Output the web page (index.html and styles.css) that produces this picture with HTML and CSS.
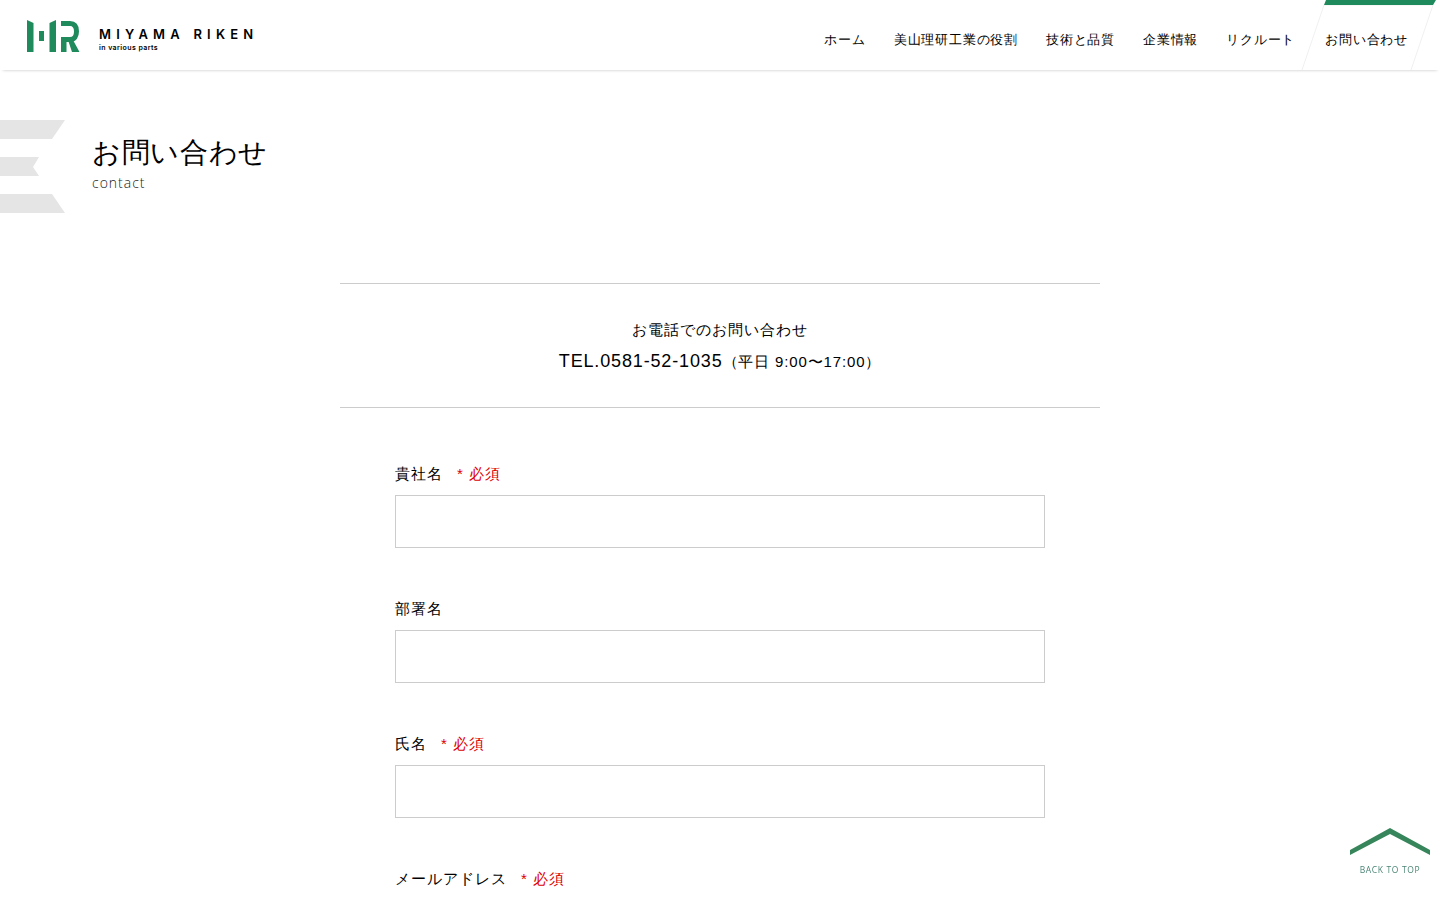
FILE: index.html
```html
<!DOCTYPE html>
<html lang="ja">
<head>
<meta charset="utf-8">
<title>お問い合わせ | MIYAMA RIKEN</title>
<link rel="stylesheet" href="styles.css">
</head>
<body>
<header class="site-header">
  <a class="brand" href="#">
    <svg class="brand-mark" viewBox="0 0 54 34" aria-hidden="true">
      <path d="M0 0l6.500 3v29H0zM12 11h5v10h-5zM29 0v32h-6.500V3z" fill="#1f8a5b"/>
      <path d="M34 3.500h9c4.800 0 6.500 3.500 6.500 8s-2 8-6.500 8h-9" fill="none" stroke="#1f8a5b" stroke-width="5"/>
      <path d="M34 17h5.500v15H34zM41 20h5l6.500 12H45z" fill="#1f8a5b"/>
    </svg>
    <span class="brand-text">
      <span class="brand-name">MIYAMA RIKEN</span>
      <span class="brand-sub">in various parts</span>
    </span>
  </a>
  <nav class="site-nav">
    <a href="#">ホーム</a>
    <a href="#">美山理研工業の役割</a>
    <a href="#">技術と品質</a>
    <a href="#">企業情報</a>
    <a href="#">リクルート</a>
    <a class="nav-current" href="#">
      <svg class="nav-tab" viewBox="0 0 136 70" aria-hidden="true">
        <path d="M1 70L23 5h109L110 70" fill="#fff" stroke="#f0f0f0"/>
        <path d="M25 0h110l-3 5H23z" fill="#1f8a5b"/>
      </svg>
      <span class="nav-label">お問い合わせ</span>
    </a>
  </nav>
</header>

<main>
  <section class="page-title">
    <svg class="title-deco" viewBox="0 0 65 93" aria-hidden="true">
      <path d="M0 0h65L52 19H0zM0 37h39l-6 10 6 9H0zM0 74h52l13 19H0z" fill="#e5e5e5"/>
    </svg>
    <div class="title-text">
      <h1>お問い合わせ</h1>
      <p>contact</p>
    </div>
  </section>

  <section class="phone">
    <p class="phone-lead">お電話でのお問い合わせ</p>
    <p class="phone-number">TEL.0581-52-1035<small>（平日 9:00〜17:00）</small></p>
  </section>

  <form class="contact-form">
    <div class="field">
      <label for="company">貴社名<span class="req">* 必須</span></label>
      <input id="company" type="text">
    </div>
    <div class="field">
      <label for="dept">部署名</label>
      <input id="dept" type="text">
    </div>
    <div class="field">
      <label for="name">氏名<span class="req">* 必須</span></label>
      <input id="name" type="text">
    </div>
    <div class="field">
      <label for="mail">メールアドレス<span class="req">* 必須</span></label>
      <input id="mail" type="email">
    </div>
  </form>
</main>

<a class="back-top" href="#">
  <svg viewBox="0 0 80 28" aria-hidden="true">
    <path d="M0 23L40 1l40 22v5L40 7 0 28z" fill="#37855a"/>
  </svg>
  <span>BACK TO TOP</span>
</a>
</body>
</html>
```
FILE: styles.css
```css
* { box-sizing: border-box; }
html, body { margin: 0; padding: 0; }
body {
  background: #fff;
  color: #000;
  font-family: "Liberation Sans", sans-serif;
  font-size: 15px;
  letter-spacing: 1px;
}
a { color: inherit; text-decoration: none; }
p, h1 { margin: 0; }

.site-header {
  height: 70px;
  display: flex;
  justify-content: space-between;
  padding: 0 32px 0 27px;
  background: #fff;
  box-shadow: 0 3px 3px -3px rgba(0,0,0,.25);
  position: relative;
}
.brand { display: flex; align-items: flex-start; padding-top: 20px; gap: 18px; }
.brand-mark { width: 54px; height: 34px; display: block; }
.brand-text { display: flex; flex-direction: column; padding-top: 6px; }
.brand-name {
  font-family: Inter, sans-serif;
  font-size: 13px;
  font-weight: 600;
  letter-spacing: .4em;
  line-height: 16px;
  white-space: nowrap;
}
.brand-sub {
  font-family: Inter, sans-serif;
  font-size: 7px;
  font-weight: 600;
  line-height: 9px;
  margin-top: 1px;
  letter-spacing: .06em;
}
.site-nav { display: flex; gap: 28px; align-items: flex-start; padding-top: 30px; font-size: 13px; line-height: 20px; letter-spacing: .8px; }
.nav-current { position: relative; margin-left: 2px; }
.nav-tab { position: absolute; left: -24px; top: -30px; width: 136px; height: 70px; }
.nav-label { position: relative; }

.page-title { display: flex; align-items: flex-start; height: 93px; margin-top: 50px; }
.title-deco { width: 65px; height: 93px; flex: none; }
.title-text { margin-left: 27px; padding-top: 14px; }
.title-text h1 { font-size: 28px; font-weight: 400; line-height: 38px; letter-spacing: .65px; }
.title-text p { font-family: "Open Sans", sans-serif; font-weight: 300; font-size: 14px; line-height: 22px; color: #222; letter-spacing: .07em; }

.phone {
  width: 760px;
  height: 125px;
  margin: 70px auto 0;
  border-top: 1px solid #ccc;
  border-bottom: 1px solid #ccc;
  text-align: center;
  padding-top: 34px;
}
.phone-lead { line-height: 24px; }
.phone-number { font-size: 18px; line-height: 28px; margin-top: 5px; letter-spacing: .85px; }
.phone-number small { font-size: 15px; }

.contact-form { width: 650px; margin: 54px auto 0; display: flex; flex-direction: column; gap: 49px; padding-bottom: 60px; }
.field { display: flex; flex-direction: column; }
.field label { line-height: 24px; margin-bottom: 9px; }
.req { color: #dd0000; margin-left: 14px; }
.field input {
  height: 53px;
  border: 1px solid #ccc;
  background: #fff;
  padding: 0 10px;
  outline: none;
  display: block;
  width: 100%;
}

.back-top {
  position: fixed;
  right: 10px;
  bottom: 24px;
  width: 80px;
  display: flex;
  flex-direction: column;
  align-items: center;
  color: #4a8575;
  font-family: "Open Sans", sans-serif;
  font-size: 8.500px;
  letter-spacing: .64px;
  line-height: 12px;
}
.back-top svg { width: 80px; height: 28px; display: block; margin-bottom: 9px; }
.back-top span { white-space: nowrap; }
```
